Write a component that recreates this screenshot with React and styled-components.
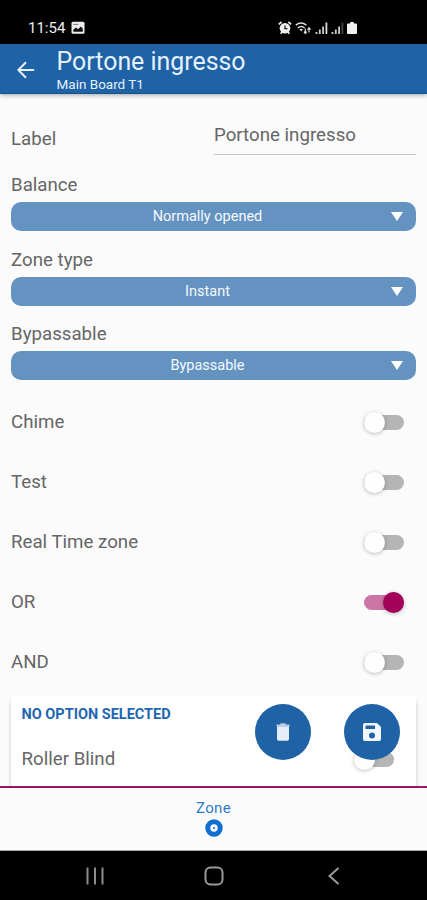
import React from 'react';
import styled, { createGlobalStyle } from 'styled-components';

const FIELDS = [
  { label: 'Balance', value: 'Normally opened' },
  { label: 'Zone type', value: 'Instant' },
  { label: 'Bypassable', value: 'Bypassable' },
];

const OPTIONS = [
  { label: 'Chime', on: false },
  { label: 'Test', on: false },
  { label: 'Real Time zone', on: false },
  { label: 'OR', on: true },
  { label: 'AND', on: false },
];

const StatusBar = () => (
  <StStatusBar>
    <StClock>11:54</StClock>
    <svg width="14" height="14" viewBox="0 0 14 14">
      <rect x="0.5" y="0.8" width="13" height="12" rx="1.5" fill="#eee" />
      <path d="M2.3 10.8V8.8L5 6.4l2 1.8 2.8-2.6 2 2.2v3z" fill="#111" />
      <path d="M2.3 3.4h5" stroke="#777" strokeWidth="1" />
    </svg>
    <StStatusIcons>
      {/* alarm */}
      <svg width="14" height="14" viewBox="0 0 14 14">
        <path d="M0.8 3.4L3.6 1M13.2 3.4L10.4 1M2.6 12.8l1.6-2M11.4 12.8l-1.6-2" stroke="#eee" strokeWidth="1.7" />
        <circle cx="7" cy="7.3" r="5.3" fill="#eee" />
        <path d="M7 4.4v3.2h2.4" stroke="#111" strokeWidth="1.2" fill="none" />
      </svg>
      {/* wifi */}
      <svg width="17" height="14" viewBox="0 0 17 14">
        <path d="M0.8 4.2Q6 0 11.4 4.2M2.7 6.8Q6.2 4 9.6 6.8" stroke="#ddd" strokeWidth="1.5" fill="none" />
        <path d="M4.4 8.3Q6.2 7 8 8.3L6.2 10.6z" fill="#ddd" />
        <path d="M10.3 7.6v4.5M8.9 10.6l1.4 1.8 1.4-1.8M14 11.4V7M12.5 8.6L14 6.8l1.5 1.8" stroke="#ddd" strokeWidth="1.2" fill="none" />
      </svg>
      <Signal last="#ddd" />
      <Signal last="#444" />
      {/* battery */}
      <svg width="10" height="14" viewBox="0 0 10 14">
        <path d="M3.2 1h3.6v1.6H9a1 1 0 0 1 1 1V12a1 1 0 0 1-1 1H1a1 1 0 0 1-1-1V3.6a1 1 0 0 1 1-1h2.2z" fill="#f2f2f2" />
      </svg>
    </StStatusIcons>
  </StStatusBar>
);

const Signal = ({ last }) => (
  <svg width="13" height="14" viewBox="0 0 13 14">
    <path d="M1.5 13v-2M4.8 13V8.6M8.1 13V5.5" stroke="#ccc" strokeWidth="1.8" />
    <path d="M11.4 13V1.5" stroke={last} strokeWidth="1.8" />
  </svg>
);

const Toggle = ({ on }) => (
  <StTrack $on={on}>
    <StThumb $on={on} />
  </StTrack>
);

const App = () => {
  return (
    <>
      <GlobalStyle />
      <StScreen>
        <StatusBar />
        <StHeader>
          <StBack>
            <svg width="18" height="18" viewBox="0 0 18 18">
              <path d="M17.2 9H1.8M9 1.3L1.3 9 9 16.7" stroke="#e8f2ff" strokeWidth="2" fill="none" />
            </svg>
          </StBack>
          <div>
            <StTitle>Portone ingresso</StTitle>
            <StSubtitle>Main Board T1</StSubtitle>
          </div>
        </StHeader>

        <StContent>
          <StLabelRow>
            <StText>Label</StText>
            <StInput type="text" defaultValue="Portone ingresso" />
          </StLabelRow>

          <StFields>
            {FIELDS.map((field) => (
              <div key={field.label}>
                <StFieldLabel>{field.label}</StFieldLabel>
                <StSelect>
                  <StSelectValue>{field.value}</StSelectValue>
                  <svg width="12" height="9" viewBox="0 0 12 9">
                    <path d="M0 0h12L6 9z" fill="#fff" />
                  </svg>
                </StSelect>
              </div>
            ))}
          </StFields>

          {OPTIONS.map((option) => (
            <StOption key={option.label}>
              <StText>{option.label}</StText>
              <Toggle on={option.on} />
            </StOption>
          ))}

          <StCard>
            <StCardTitle>NO OPTION SELECTED</StCardTitle>
            <StCardRow>
              <StText>Roller Blind</StText>
              <Toggle on={false} />
            </StCardRow>
          </StCard>

          <StActions>
            <StFab aria-label="Delete">
              <svg width="14" height="20" viewBox="0 0 14 20">
                <path d="M0.5 2.5H4l.8-1.2h4.4l.8 1.2h3.5v1.8H.5z" fill="#b9cbe6" />
                <path d="M1 4.3h12V17a1.8 1.8 0 0 1-1.8 1.8H2.8A1.8 1.8 0 0 1 1 17z" fill="#e6eefb" />
              </svg>
            </StFab>
            <StFab aria-label="Save">
              <svg width="18" height="18" viewBox="0 0 18 18">
                <path
                  d="M2 0h12l4 4v12a2 2 0 0 1-2 2H2a2 2 0 0 1-2-2V2a2 2 0 0 1 2-2zM2.5 2.5V6H12V2.5zM9 9.5a3 3 0 1 0 0 6 3 3 0 0 0 0-6z"
                  fill="#f1f7ff"
                  fillRule="evenodd"
                />
              </svg>
            </StFab>
          </StActions>
        </StContent>

        <StTabBar>
          <StTabName>Zone</StTabName>
          <svg width="18" height="18" viewBox="0 0 18 18">
            <circle cx="9" cy="9" r="6.2" fill="#fff" stroke="#0f6fd0" strokeWidth="5" />
            <circle cx="9" cy="9" r="1.3" fill="#5b9be0" />
          </svg>
        </StTabBar>

        <StNavBar>
          <svg width="18" height="18" viewBox="0 0 18 18">
            <path d="M1.5 0.5v17M9 0.5v17M16.5 0.5v17" stroke="#8c8c8c" strokeWidth="2" />
          </svg>
          <svg width="20" height="20" viewBox="0 0 20 20">
            <rect x="1.5" y="1.5" width="17" height="17" rx="5" stroke="#999" strokeWidth="2" fill="none" />
          </svg>
          <svg width="16" height="18" viewBox="-4 0 16 18">
            <path d="M10.5 1L1.5 9l9 8" stroke="#999" strokeWidth="2" fill="none" />
          </svg>
        </StNavBar>
      </StScreen>
    </>
  );
};

export default App;

const GlobalStyle = createGlobalStyle`
  * {
    box-sizing: border-box;
  }
  body {
    margin: 0;
    font-family: Roboto, "Liberation Sans", sans-serif;
  }
  p {
    margin: 0;
  }
  svg {
    display: block;
    flex-shrink: 0;
  }
`

const StScreen = styled.div`
  display: flex;
  flex-direction: column;
  width: 427px;
  height: 900px;
  background-color: #fbfbfb;
  overflow: hidden;
`

const StStatusBar = styled.div`
  display: flex;
  align-items: center;
  height: 44px;
  padding: 12px 70px 0 28px;
  background-color: #000;
  flex-shrink: 0;
`
const StClock = styled.p`
  width: 43px;
  color: #eee;
  font-size: 15px;
  line-height: 16px;
  white-space: nowrap;
`
const StStatusIcons = styled.div`
  display: flex;
  gap: 3px;
  margin-left: auto;
`

const StHeader = styled.div`
  display: flex;
  height: 50px;
  background-color: #1f62a5;
  border-bottom: 1px solid #11568f;
  box-shadow: 0 1px 5px rgba(0, 0, 0, 0.35);
  color: #e4f1ff;
  flex-shrink: 0;
  z-index: 1;
`
const StBack = styled.div`
  width: 56.5px;
  padding: 17px 0 0 17px;
`
const StTitle = styled.p`
  font-size: 24.9px;
  line-height: 30px;
  padding-top: 3px;
`
const StSubtitle = styled.p`
  font-size: 13.5px;
  line-height: 15px;
`

const StContent = styled.div`
  position: relative;
  height: 692px;
  padding: 0 11px;
  overflow: hidden;
  flex-shrink: 0;
`
const StText = styled.p`
  color: #666;
  font-size: 18.7px;
  line-height: 30px;
`
const StLabelRow = styled.div`
  display: flex;
  justify-content: space-between;
  height: 76px;
  padding-top: 30px;
`
const StInput = styled.input`
  width: 202px;
  height: 31px;
  padding: 0 0 9px;
  border: none;
  border-bottom: 1px solid #c4c4c4;
  background: none;
  color: #666;
  font-family: inherit;
  font-size: 18.7px;
  outline: none;
`
const StFields = styled.div`
  display: flex;
  flex-direction: column;
  gap: 13.6px;
  margin-bottom: 12.2px;
`
const StFieldLabel = styled(StText)`
  margin-bottom: 2px;
`
const StSelect = styled.div`
  display: flex;
  align-items: center;
  width: 405px;
  height: 29px;
  padding-right: 13px;
  border-radius: 10px;
  background-color: #6593c1;
  color: #f4f9ff;
`
const StSelectValue = styled.p`
  flex: 1;
  padding: 1px 0 0 13px;
  font-size: 14.5px;
  line-height: 18px;
  text-align: center;
`

const StOption = styled.div`
  display: flex;
  justify-content: space-between;
  align-items: center;
  height: 60px;
  padding-right: 12px;
`
const StTrack = styled.div`
  display: flex;
  align-items: center;
  justify-content: ${({ $on }) => ($on ? 'flex-end' : 'flex-start')};
  width: 40px;
  height: 15px;
  border-radius: 8px;
  background-color: ${({ $on }) => ($on ? '#cc76a5' : '#b5b5b5')};
`
const StThumb = styled.div`
  width: 21px;
  height: 21px;
  border-radius: 50%;
  background-color: ${({ $on }) => ($on ? '#a3005a' : '#fefefe')};
  box-shadow: 0 1px 4px rgba(0, 0, 0, 0.25);
  flex-shrink: 0;
`

const StCard = styled.div`
  width: 405px;
  height: 130px;
  margin-top: 4px;
  padding: 9px 22px 0 10.5px;
  border-radius: 4px;
  background-color: #fff;
  box-shadow: 0 5px 4px rgba(0, 0, 0, 0.22);
`
const StCardTitle = styled.p`
  color: #1f66b0;
  font-size: 14.5px;
  font-weight: bold;
  line-height: 20px;
`
const StCardRow = styled.div`
  display: flex;
  justify-content: space-between;
  align-items: center;
  padding-top: 19px;
`
/* floats over the option list */
const StActions = styled.div`
  position: absolute;
  right: 27px;
  bottom: 26.5px;
  display: flex;
  gap: 33px;
`
const StFab = styled.button`
  display: flex;
  align-items: center;
  justify-content: center;
  width: 56px;
  height: 56px;
  padding: 0;
  border: none;
  border-radius: 50%;
  background-color: #1f62a5;
  cursor: pointer;
`

const StTabBar = styled.div`
  display: flex;
  flex-direction: column;
  align-items: center;
  height: 65px;
  padding-top: 11px;
  border-top: 2px solid #96185a;
  border-bottom: 1px solid #aaa;
  flex-shrink: 0;
`
const StTabName = styled.p`
  color: #2f7bc9;
  font-size: 15px;
  line-height: 18px;
  margin-bottom: 2px;
  letter-spacing: 0.3px;
`

const StNavBar = styled.div`
  display: flex;
  align-items: center;
  justify-content: space-between;
  height: 49px;
  padding: 0 87px 0 86px;
  background-color: #000;
`
